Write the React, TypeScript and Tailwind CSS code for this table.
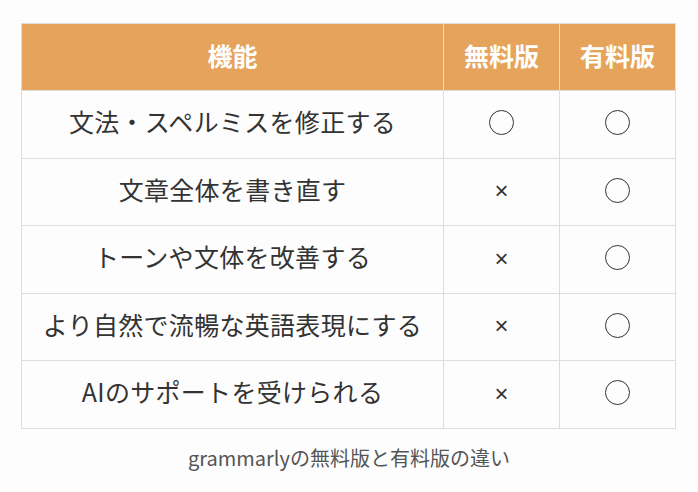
import React from "react";

const rows: [string, string, string][] = [
  ["文法・スペルミスを修正する", "○", "○"],
  ["文章全体を書き直す", "×", "○"],
  ["トーンや文体を改善する", "×", "○"],
  ["より自然で流暢な英語表現にする", "×", "○"],
  ["AIのサポートを受けられる", "×", "○"],
];

function Circle() {
  return <span className="inline-block w-[25px] h-[25px] rounded-full border-[1.5px] border-[#333] align-middle" />;
}

export default function App() {
  return (
    <div
      className="w-[698px] h-[492px] bg-[#fdfdfd] pt-[23px] px-[21px] text-[#333]"
      style={{ fontFamily: '"Noto Sans CJK JP", "Noto Sans", sans-serif' }}
    >
      <table className="w-[654px] border-collapse table-fixed">
        <colgroup>
          <col className="w-[422px]" />
          <col className="w-[116px]" />
          <col className="w-[116px]" />
        </colgroup>
        <thead>
          <tr className="h-[67px] bg-[#e6a35c] text-white">
            <th className="border border-[#dddddd] text-[25px] font-bold pb-[3px]">機能</th>
            <th className="border border-[#dddddd] text-[25px] font-bold pb-[3px]">無料版</th>
            <th className="border border-[#dddddd] text-[25px] font-bold pb-[3px]">有料版</th>
          </tr>
        </thead>
        <tbody>
          {rows.map((r, i) => (
            <tr key={i} className="h-[67.5px]">
              <td className="border border-[#dddddd] text-center text-[25px] tracking-[0.3px] leading-none pb-[5px]">{r[0]}</td>
              <td className="border border-[#dddddd] text-center leading-none pb-[3px]">
                {r[1] === "○" ? (
                  <Circle />
                ) : (
                  <span
                    className="inline-block align-middle text-[24px] font-medium pt-[2px]"
                    style={{ fontFamily: '"Liberation Sans", sans-serif' }}
                  >
                    ×
                  </span>
                )}
              </td>
              <td className="border border-[#dddddd] text-center leading-none pb-[3px]">
                <Circle />
              </td>
            </tr>
          ))}
        </tbody>
      </table>
      <div className="mt-[19px] text-center text-[20px] text-[#555] leading-none">
        grammarlyの無料版と有料版の違い
      </div>
    </div>
  );
}
